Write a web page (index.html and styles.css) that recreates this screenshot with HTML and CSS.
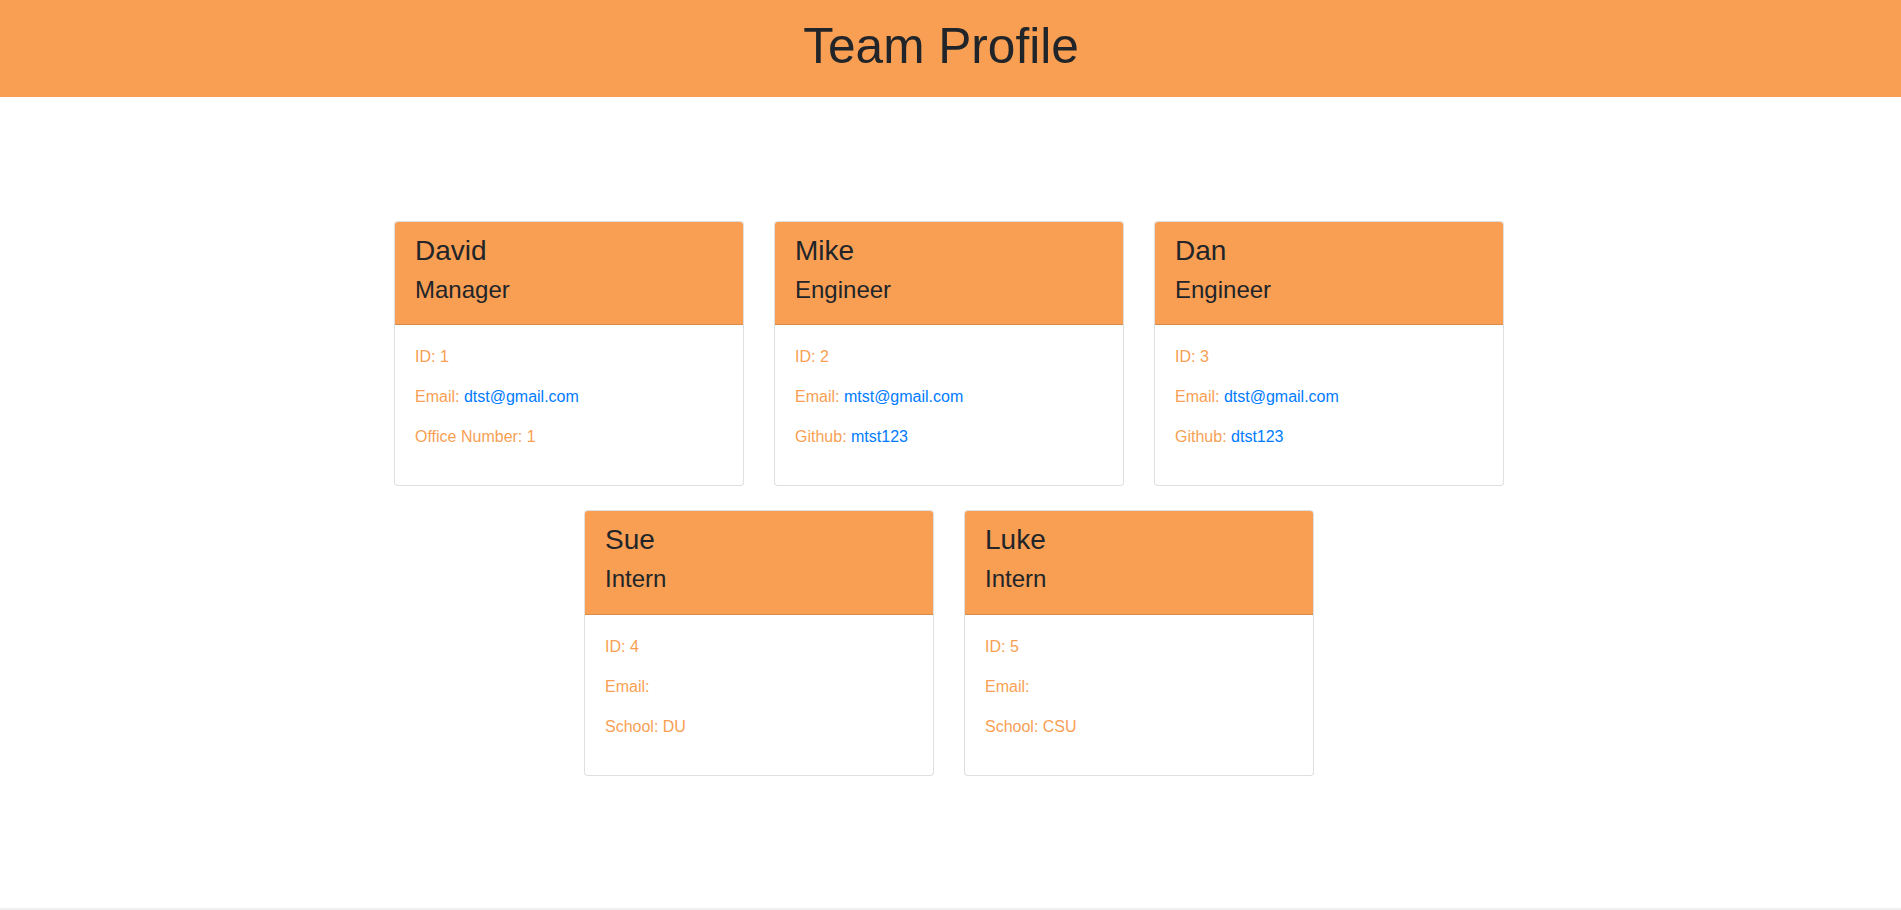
FILE: index.html
```html
<!DOCTYPE html>
<html lang="en">
<head>
<meta charset="UTF-8">
<title>Team Profile</title>
<link rel="stylesheet" href="styles.css">
</head>
<body>
<header class="banner">
  <h1 class="banner-title">Team Profile</h1>
</header>
<main class="team">
  <div class="team-row">
    <div class="card">
      <div class="card-header">
        <h3 class="card-name">David</h3>
        <h4 class="card-role">Manager</h4>
      </div>
      <div class="card-body">
        <p class="card-line">ID: 1</p>
        <p class="card-line">Email: <a class="card-link" href="#">dtst@gmail.com</a></p>
        <p class="card-line">Office Number: 1</p>
      </div>
    </div>
    <div class="card">
      <div class="card-header">
        <h3 class="card-name">Mike</h3>
        <h4 class="card-role">Engineer</h4>
      </div>
      <div class="card-body">
        <p class="card-line">ID: 2</p>
        <p class="card-line">Email: <a class="card-link" href="#">mtst@gmail.com</a></p>
        <p class="card-line">Github: <a class="card-link" href="#">mtst123</a></p>
      </div>
    </div>
    <div class="card">
      <div class="card-header">
        <h3 class="card-name">Dan</h3>
        <h4 class="card-role">Engineer</h4>
      </div>
      <div class="card-body">
        <p class="card-line">ID: 3</p>
        <p class="card-line">Email: <a class="card-link" href="#">dtst@gmail.com</a></p>
        <p class="card-line">Github: <a class="card-link" href="#">dtst123</a></p>
      </div>
    </div>
  </div>
  <div class="team-row">
    <div class="card">
      <div class="card-header">
        <h3 class="card-name">Sue</h3>
        <h4 class="card-role">Intern</h4>
      </div>
      <div class="card-body">
        <p class="card-line">ID: 4</p>
        <p class="card-line">Email: </p>
        <p class="card-line">School: DU</p>
      </div>
    </div>
    <div class="card">
      <div class="card-header">
        <h3 class="card-name">Luke</h3>
        <h4 class="card-role">Intern</h4>
      </div>
      <div class="card-body">
        <p class="card-line">ID: 5</p>
        <p class="card-line">Email: </p>
        <p class="card-line">School: CSU</p>
      </div>
    </div>
  </div>
</main>
<footer class="page-end"></footer>
</body>
</html>
```
FILE: styles.css
```css
* { box-sizing: border-box; }
html, body { margin: 0; padding: 0; }
body {
  font-family: "Liberation Sans", Arial, sans-serif;
  color: #212529;
  background: #fff;
  min-height: 100vh;
  display: flex;
  flex-direction: column;
}
.banner {
  background: #f89f54;
  height: 97px;
  padding: 17px 19px 0 0;
  text-align: center;
}
.banner-title {
  margin: 0;
  font-size: 49.6px;
  font-weight: 400;
  line-height: 1.2;
  color: #212529;
}
.team {
  flex: 1;
  padding: 124px 3px 0 0;
  display: flex;
  flex-direction: column;
  gap: 24px;
}
.team-row {
  display: flex;
  justify-content: center;
  gap: 30px;
}
.card {
  width: 350px;
  border: 1px solid rgba(0,0,0,.125);
  border-radius: 4px;
  overflow: hidden;
  background: #fff;
}
.card-header {
  background: #f89f54;
  padding: 12px 20px;
  border-bottom: 1px solid rgba(0,0,0,.125);
}
.card-name {
  margin: 0 0 8px;
  font-size: 28px;
  font-weight: 400;
  line-height: 1.2;
}
.card-role {
  margin: 0 0 8px;
  font-size: 24px;
  font-weight: 400;
  line-height: 1.2;
}
.card-body {
  padding: 20px;
}
.card-line {
  margin: 0 0 16px;
  font-size: 16px;
  line-height: 1.5;
  color: #f89f54;
}
.card-link {
  color: #007bff;
  text-decoration: none;
}
.page-end {
  height: 2px;
  background: #efefef;
}
```
